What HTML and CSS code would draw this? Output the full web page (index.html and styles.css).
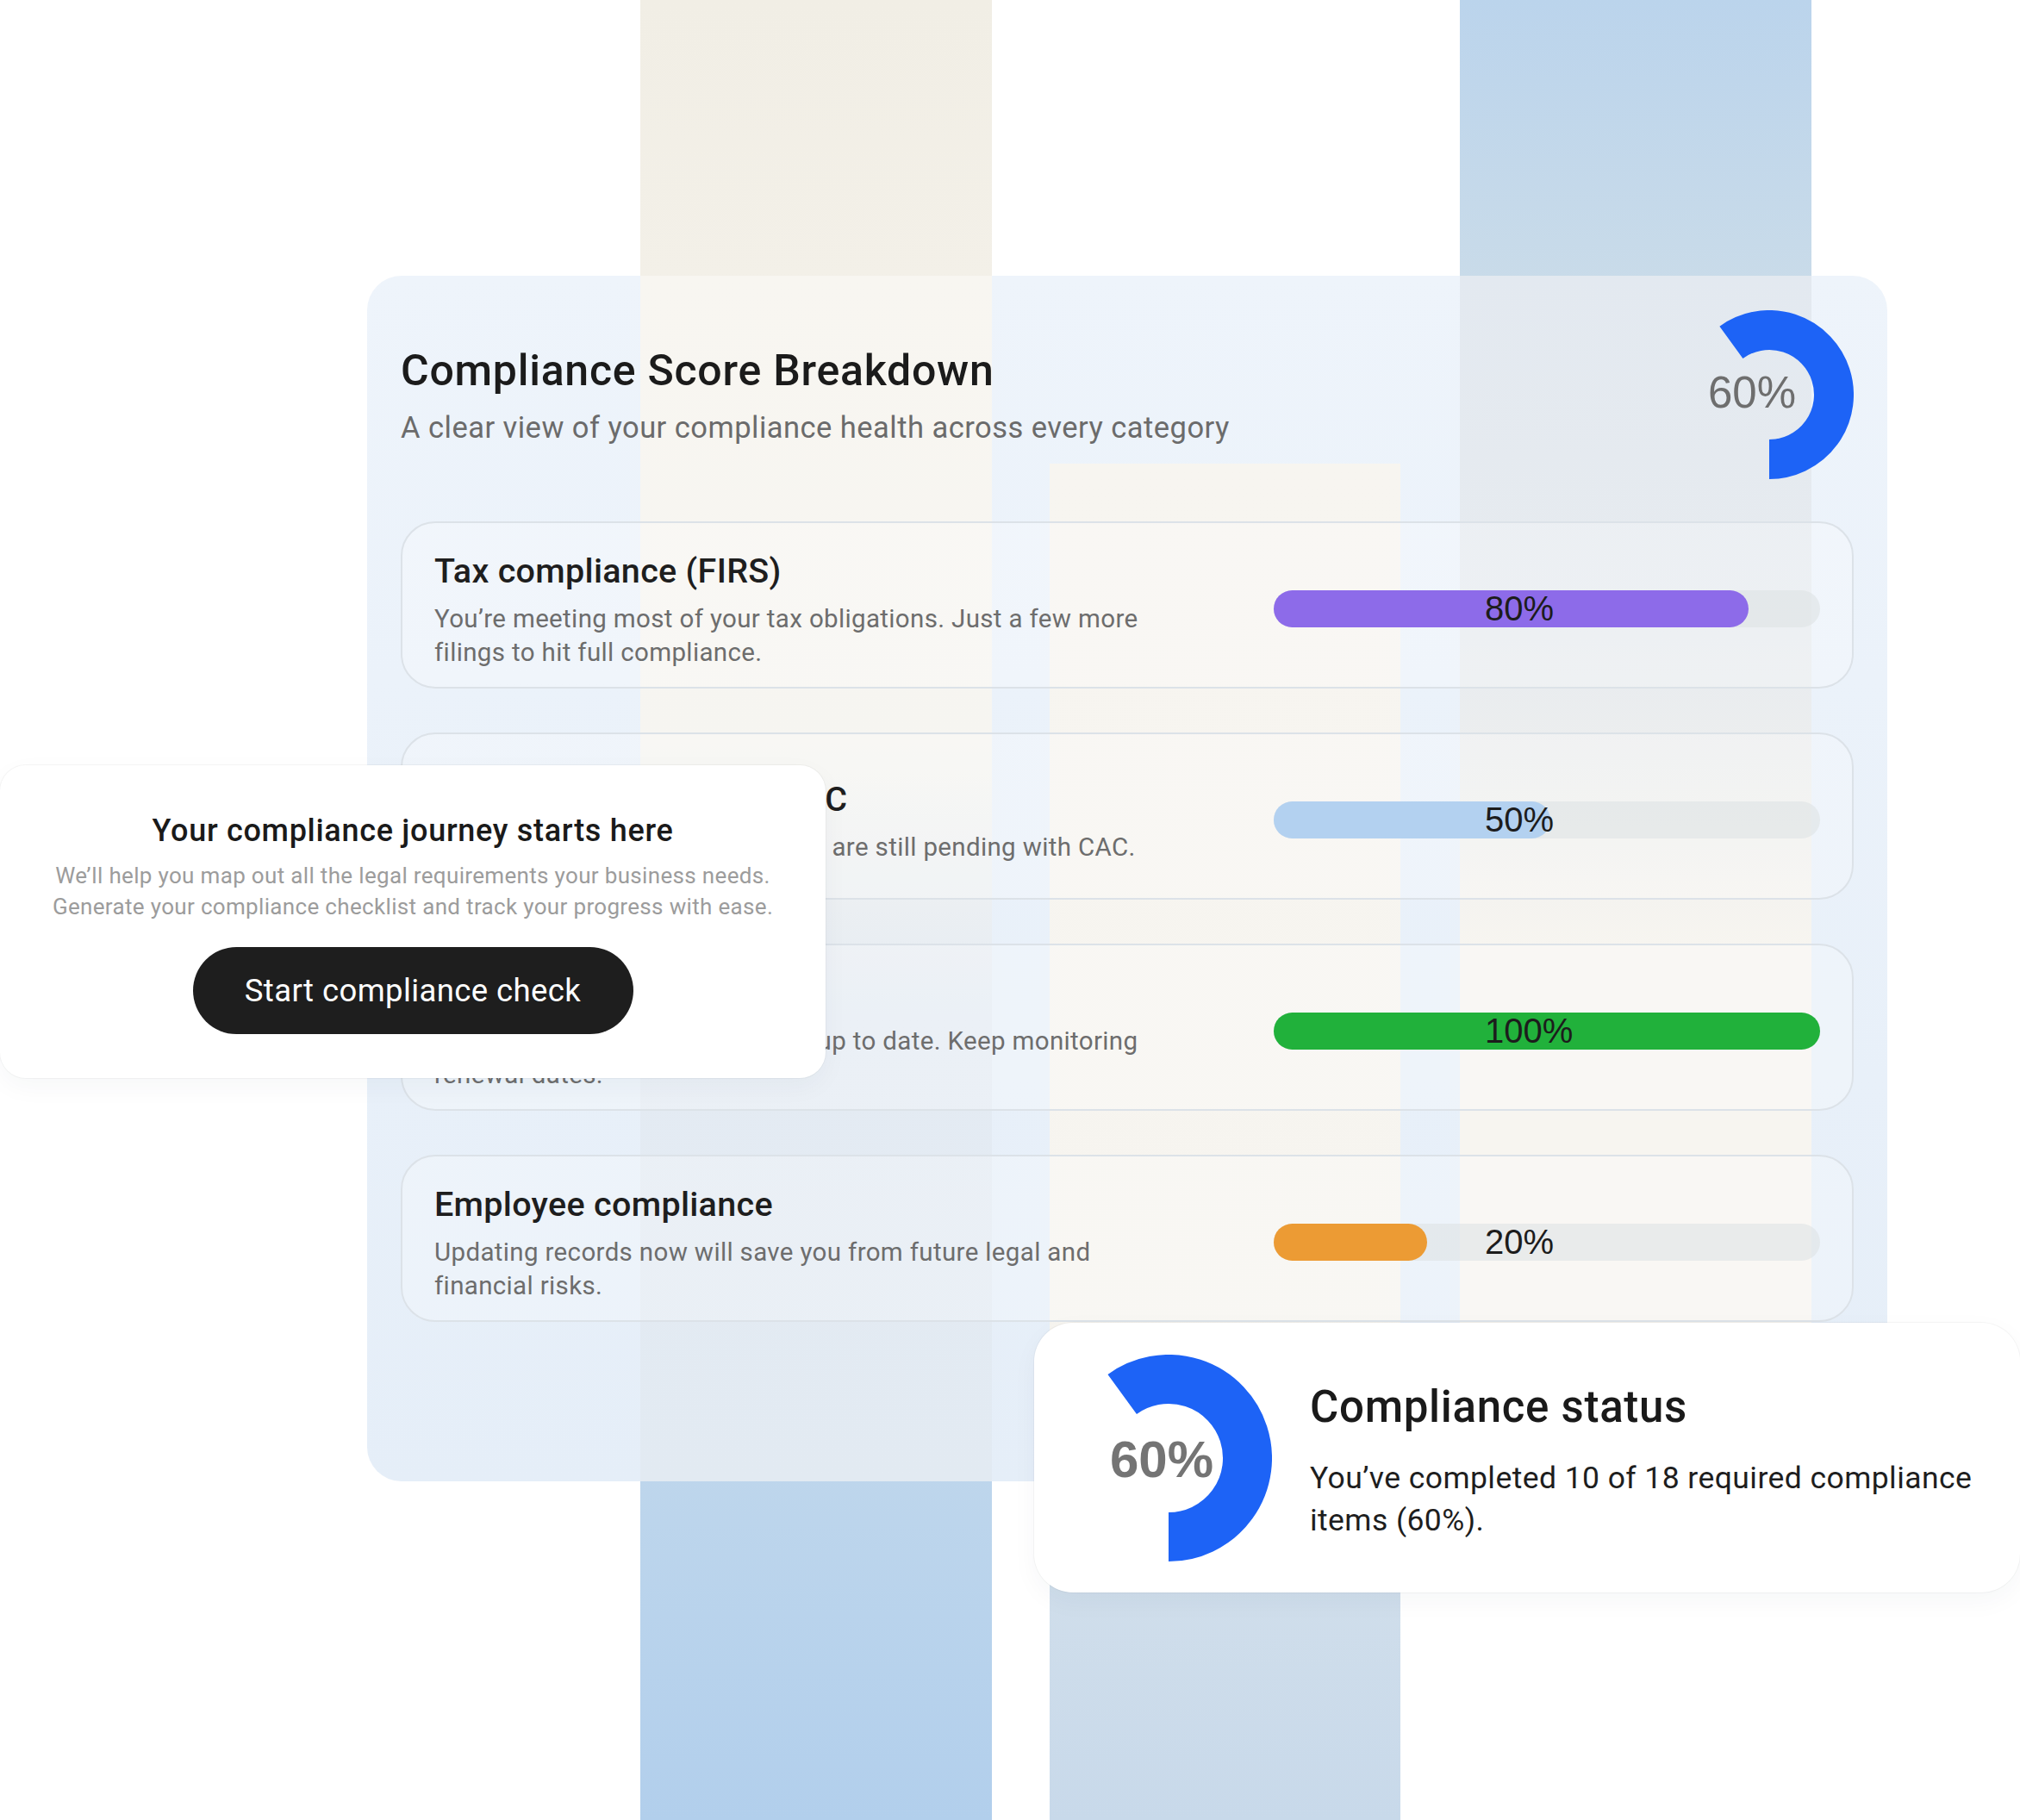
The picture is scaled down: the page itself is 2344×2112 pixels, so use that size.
FILE: index.html
```html
<!DOCTYPE html>
<html lang="en">
<head>
<meta charset="utf-8">
<title>Compliance Score Breakdown</title>
<link rel="stylesheet" href="styles.css">
</head>
<body>
<div class="stage">
  <section class="score-card">
    <header class="score-head">
      <div class="score-titles">
        <h1 class="score-title">Compliance Score Breakdown</h1>
        <p class="score-sub">A clear view of your compliance health across every category</p>
      </div>
      <div class="donut donut-top">
        <svg width="196" height="196" viewBox="0 0 196 196">
          <path d="M 53.92 37.32 A 75 75 0 1 1 98 173" fill="none" stroke="#1d63f6" stroke-width="46"/>
        </svg>
        <span class="donut-label donut-label-top">60%</span>
      </div>
    </header>

    <div class="rows">
      <div class="row">
        <div class="row-text">
          <h2 class="row-title">Tax compliance (FIRS)</h2>
          <p class="row-desc">You’re meeting most of your tax obligations. Just a few more filings to hit full compliance.</p>
        </div>
        <div class="bar"><div class="fill fill-purple" style="width:86.9%"></div><span class="bar-label">80%</span></div>
      </div>
      <div class="row">
        <div class="row-text">
          <h2 class="row-title">Business registration: CAC</h2>
          <p class="row-desc">Some of your annual return filings are still pending with CAC.</p>
        </div>
        <div class="bar"><div class="fill fill-blue" style="width:50.6%"></div><span class="bar-label">50%</span></div>
      </div>
      <div class="row">
        <div class="row-text">
          <h2 class="row-title">Licenses &amp; permits</h2>
          <p class="row-desc">All your licenses and permits are up to date. Keep monitoring renewal dates.</p>
        </div>
        <div class="bar"><div class="fill fill-green" style="width:100%"></div><span class="bar-label">100%</span></div>
      </div>
      <div class="row">
        <div class="row-text">
          <h2 class="row-title">Employee compliance</h2>
          <p class="row-desc">Updating records now will save you from future legal and financial risks.</p>
        </div>
        <div class="bar"><div class="fill fill-orange" style="width:28%"></div><span class="bar-label">20%</span></div>
      </div>
    </div>
  </section>

  <aside class="journey-card">
    <h3 class="journey-title">Your compliance journey starts here</h3>
    <p class="journey-desc">We’ll help you map out all the legal requirements your business needs.<br>Generate your compliance checklist and track your progress with ease.</p>
    <button class="journey-btn" type="button">Start compliance check</button>
  </aside>

  <aside class="status-card">
    <div class="donut donut-status">
      <svg width="240" height="240" viewBox="0 0 240 240">
        <path d="M 66.22 45.98 A 91.5 91.5 0 1 1 120 211.5" fill="none" stroke="#1d63f6" stroke-width="57"/>
      </svg>
      <span class="donut-label donut-label-status">60%</span>
    </div>
    <div class="status-text">
      <h3 class="status-title">Compliance status</h3>
      <p class="status-desc">You’ve completed 10 of 18 required compliance items (60%).</p>
    </div>
  </aside>
</div>
</body>
</html>
```

FILE: styles.css
```css
* { box-sizing: border-box; }

html, body {
  margin: 0;
  padding: 0;
  background: #ffffff;
}

body {
  font-family: Roboto, "Noto Sans", "Liberation Sans", sans-serif;
  color: #1d1d1d;
}

h1, h2, h3, p { margin: 0; }

.stage {
  position: relative;
  width: 2344px;
  height: 2112px;
  overflow: hidden;
  padding: 320px 154px 0 426px;
  background:
    linear-gradient(180deg, #f1eee5 0%, #f3f0e8 100%) 743px 0 / 408px 330px no-repeat,
    linear-gradient(180deg, #bbd4ec 0%, #c9dbe9 100%) 1694px 0 / 408px 330px no-repeat,
    linear-gradient(180deg, #bed6ec 0%, #b2cfec 100%) 743px 1700px / 408px 412px no-repeat,
    linear-gradient(180deg, #d0deeb 0%, #c8d9ea 100%) 1218px 1830px / 407px 282px no-repeat,
    #ffffff;
}

/* ---------- main card ---------- */
.score-card {
  width: 1764px;
  height: 1399px;
  border-radius: 40px;
  padding: 40px 39px 0 39px;
  background:
    linear-gradient(180deg, #f8f6f1 0, #f6f5f1 540px, #e4ebf3 860px, #e2eaf2 100%) 317px 0 / 408px 100% no-repeat,
    linear-gradient(180deg, #f7f5f0 0%, #f6f4ef 100%) 792px 218px / 407px 1181px no-repeat,
    linear-gradient(180deg, #e3e9f0 0, #e7ebef 420px, #f0f0ee 640px, #f7f5f0 780px, #f7f5f0 100%) 1268px 0 / 408px 100% no-repeat,
    linear-gradient(180deg, #eef4fb 0%, #e5eef8 100%);
}

.score-head {
  display: flex;
  justify-content: space-between;
  align-items: center;
  height: 196px;
}

.score-titles {
  display: flex;
  flex-direction: column;
  gap: 16px;
  padding-top: 2px;
}

.score-title {
  font-size: 50px;
  line-height: 58px;
  font-weight: 500;
  letter-spacing: 0.75px;
  color: #1b1b1b;
}

.score-sub {
  font-size: 34.5px;
  line-height: 42px;
  font-weight: 400;
  letter-spacing: 0.47px;
  color: #6b6b6b;
}

.donut {
  position: relative;
  flex: none;
}

.donut svg { display: block; }

.donut-label {
  position: absolute;
  top: 0;
  left: 0;
  display: flex;
  align-items: center;
  justify-content: center;
  font-family: "Liberation Sans", Arial, sans-serif;
  color: #6e6e6e;
}

.donut-label-top {
  width: 156px;
  height: 190px;
  font-size: 51px;
}

.donut-label-status {
  width: 224px;
  height: 244px;
  font-size: 60px;
  font-weight: 700;
  color: #747474;
}

/* ---------- rows ---------- */
.rows {
  margin-top: 49px;
  display: flex;
  flex-direction: column;
  gap: 51px;
}

.row {
  height: 194px;
  border: 2px solid #dce2e8;
  border-radius: 40px;
  background: rgba(255, 255, 255, 0.25);
  padding: 34px 37px 21px 37px;
  display: flex;
  align-items: center;
  justify-content: space-between;
}

.row-text {
  width: 860px;
  display: flex;
  flex-direction: column;
  gap: 13px;
}

.row-title {
  font-size: 39.5px;
  line-height: 46px;
  font-weight: 500;
  letter-spacing: 0.3px;
  color: #1e1e1e;
  white-space: nowrap;
}

.row-desc {
  font-size: 29.5px;
  line-height: 39px;
  letter-spacing: 0.35px;
  color: #6d6d6d;
}

.bar {
  position: relative;
  width: 634px;
  height: 43px;
  border-radius: 22px;
  background: rgba(222, 226, 229, 0.6);
  flex: none;
  margin-top: -4px;
}

.fill {
  height: 100%;
  border-radius: 22px;
}

.fill-purple { background: #8d6be9; }
.fill-blue { background: #b3d1f0; }
.fill-green { background: #21b13b; }
.fill-orange { background: #ec9b34; }

.bar-label {
  position: absolute;
  left: 245px;
  top: 0;
  height: 43px;
  display: flex;
  align-items: center;
  font-family: "Liberation Sans", Arial, sans-serif;
  font-size: 40px;
  color: #1c1c1c;
}

/* ---------- journey card ---------- */
.journey-card {
  position: absolute;
  left: 0;
  top: 888px;
  width: 958px;
  height: 363px;
  background: #ffffff;
  border-radius: 30px;
  box-shadow: 0 0 0 1px rgba(0, 0, 0, 0.035), 0 10px 30px rgba(30, 50, 80, 0.04);
  display: flex;
  flex-direction: column;
  align-items: center;
  justify-content: center;
  text-align: center;
  padding-top: 2px;
}

.journey-title {
  font-size: 36px;
  line-height: 44px;
  font-weight: 500;
  letter-spacing: 0.7px;
  color: #1a1a1a;
}

.journey-desc {
  margin-top: 12px;
  font-size: 26px;
  line-height: 36px;
  letter-spacing: 0.33px;
  color: #9c9c9c;
}

.journey-btn {
  margin-top: 29px;
  width: 511px;
  height: 101px;
  border: none;
  border-radius: 51px;
  background: #1e1e1e;
  color: #ffffff;
  font-family: Roboto, "Noto Sans", sans-serif;
  font-size: 36.5px;
  letter-spacing: 0.4px;
  font-weight: 400;
}

/* ---------- status card ---------- */
.status-card {
  position: absolute;
  left: 1200px;
  top: 1535px;
  width: 1144px;
  height: 313px;
  background: #ffffff;
  border-radius: 45px;
  box-shadow: 0 0 0 1px rgba(0, 0, 0, 0.035), 0 10px 30px rgba(30, 50, 80, 0.04);
  display: flex;
  align-items: center;
  gap: 44px;
  padding-left: 36px;
}

.status-text {
  display: flex;
  flex-direction: column;
  gap: 28px;
  padding-top: 8px;
}

.status-title {
  font-size: 51px;
  line-height: 60px;
  font-weight: 500;
  letter-spacing: 0.7px;
  color: #1a1a1a;
}

.status-desc {
  width: 800px;
  font-size: 35.5px;
  line-height: 49px;
  letter-spacing: 0.43px;
  color: #1e1e1e;
}
```
